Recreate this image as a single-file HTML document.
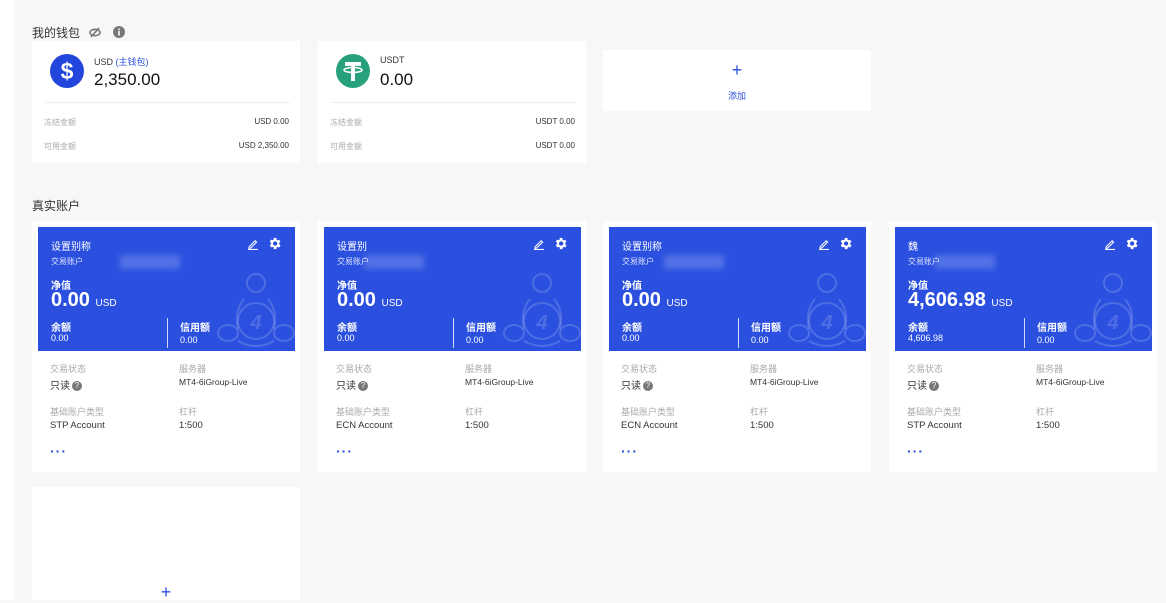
<!DOCTYPE html>
<html><head><meta charset="utf-8">
<style>
*{margin:0;padding:0;box-sizing:border-box}
body{width:1166px;height:600px;overflow:hidden;background:#f7f7f8;font-family:"Liberation Sans","Noto Sans CJK SC",sans-serif;position:relative;color:#222}
.strip{position:absolute;left:0;top:0;width:14px;height:600px;background:#fff}
.a{position:absolute;white-space:nowrap}
.card{position:absolute;background:#fff}
.hd{position:absolute;left:6px;top:6px;width:257px;height:124px;background:#2b50df;color:#fff;overflow:hidden}
.blur{position:absolute;background:rgba(220,230,255,.22);filter:blur(3px)}
.v{color:#333;font-size:10px}
</style></head><body>
<div class="strip"></div>

<div class="a" style="left:32px;top:24px;font-size:12px;color:#333">我的钱包</div>
<svg class="a" style="left:89px;top:27px" width="12" height="11" viewBox="0 0 12 11"><ellipse cx="6" cy="5.5" rx="5" ry="3.2" fill="none" stroke="#777" stroke-width="1.6"/><line x1="2" y1="10" x2="10" y2="1" stroke="#777" stroke-width="1.6"/></svg>
<svg class="a" style="left:113px;top:26px" width="12" height="12"><circle cx="6" cy="6" r="6" fill="#777"/><rect x="5.2" y="5" width="1.6" height="4.5" fill="#fff"/><rect x="5.2" y="2.6" width="1.6" height="1.5" fill="#fff"/></svg>

<div class="card" style="left:32px;top:41px;width:268px;height:122px">
  <svg class="a" style="left:18px;top:13px" width="34" height="34"><circle cx="17" cy="17" r="17" fill="#2246dc"/><text x="17" y="25" text-anchor="middle" font-size="23" font-weight="bold" fill="#fff" font-family="Liberation Sans">$</text></svg>
  <div class="a" style="left:62px;top:14px;font-size:9px;color:#333">USD <span style="color:#2b50df">(主钱包)</span></div>
  <div class="a" style="left:62px;top:29px;font-size:17px;color:#111">2,350.00</div>
  <div class="a" style="left:12px;top:61px;width:246px;height:1px;background:#eee"></div>
  <div class="a" style="left:12px;top:76px;font-size:8px;color:#aaa">冻结金额</div>
  <div class="a v" style="right:11px;top:76px;font-size:8px">USD 0.00</div>
  <div class="a" style="left:12px;top:100px;font-size:8px;color:#aaa">可用金额</div>
  <div class="a v" style="right:11px;top:100px;font-size:8px">USD 2,350.00</div>
</div>
<div class="card" style="left:318px;top:41px;width:268px;height:122px">
  <svg class="a" style="left:18px;top:13px" width="34" height="34"><circle cx="17" cy="17" r="17" fill="#26a17b"/><rect x="9" y="8" width="16" height="4" fill="#fff"/><rect x="15" y="8" width="4" height="19" fill="#fff"/><ellipse cx="17" cy="16" rx="9" ry="2.5" fill="none" stroke="#fff" stroke-width="1.6"/></svg>
  <div class="a" style="left:62px;top:14px;font-size:9px;color:#333">USDT</div>
  <div class="a" style="left:62px;top:29px;font-size:17px;color:#111">0.00</div>
  <div class="a" style="left:12px;top:61px;width:246px;height:1px;background:#eee"></div>
  <div class="a" style="left:12px;top:76px;font-size:8px;color:#aaa">冻结金额</div>
  <div class="a v" style="right:11px;top:76px;font-size:8px">USDT 0.00</div>
  <div class="a" style="left:12px;top:100px;font-size:8px;color:#aaa">可用金额</div>
  <div class="a v" style="right:11px;top:100px;font-size:8px">USDT 0.00</div>
</div>
<div class="card" style="left:603px;top:50px;width:268px;height:61px">
  <div class="a" style="left:0;width:268px;text-align:center;top:10px;font-size:18px;color:#2b50df;font-weight:300">+</div>
  <div class="a" style="left:0;width:268px;text-align:center;top:39px;font-size:9px;color:#2b50df">添加</div>
</div>

<div class="a" style="left:32px;top:197px;font-size:12px;color:#333">真实账户</div>

<div id="acc"></div>
<script>
const data=[
 {x:32,t:"设置别称",n:"0.00",b:"0.00",type:"STP Account",bl:82},
 {x:318,t:"设置别",n:"0.00",b:"0.00",type:"ECN Account",bl:40},
 {x:603,t:"设置别称",n:"0.00",b:"0.00",type:"ECN Account",bl:55},
 {x:889,t:"魏",n:"4,606.98",b:"4,606.98",type:"STP Account",bl:40}
];
let h="";
for(const d of data){
h+=`<div class="card" style="left:${d.x}px;top:221px;width:268px;height:251px">
<div class="hd">
 <div class="a" style="left:13px;top:11px;font-size:10px">${d.t}</div>
 <div class="a" style="left:13px;top:29px;font-size:8px;color:#dfe6ff">交易账户</div>
 <div class="blur" style="left:${d.bl}px;top:28px;width:60px;height:14px"></div>
 <div class="a" style="left:13px;top:50px;font-size:10px;font-weight:bold">净值</div>
 <div class="a" style="left:13px;top:62px;font-size:20px;font-weight:bold">${d.n} <span style="font-size:10px;font-weight:normal">USD</span></div>
 <div class="a" style="left:13px;top:92px;font-size:10px;font-weight:bold">余额</div>
 <div class="a" style="left:13px;top:106px;font-size:9px">${d.b}</div>
 <div class="a" style="left:129px;top:91px;width:1px;height:30px;background:#cfd8ff"></div>
 <div class="a" style="left:142px;top:92px;font-size:10px;font-weight:bold">信用额</div>
 <div class="a" style="left:142px;top:108px;font-size:9px">0.00</div>
 <svg class="a" style="left:209px;top:11px" width="12" height="12" viewBox="0 0 11 11"><path d="M2 8 L7.5 2.5 L8.8 3.8 L3.3 9.3 L1.8 9.5 Z" fill="none" stroke="#fff" stroke-width="1"/><line x1="1" y1="10.5" x2="10" y2="10.5" stroke="#fff" stroke-width="1"/></svg>
 <svg class="a" style="left:229px;top:9px" width="15" height="15" viewBox="0 0 24 24"><path fill="#fff" d="M19.4 13a7.8 7.8 0 0 0 0-2l2.1-1.6-2-3.5-2.5 1a7.6 7.6 0 0 0-1.7-1L15 3h-4l-.4 2.7a7.6 7.6 0 0 0-1.7 1l-2.5-1-2 3.5L6.6 11a7.8 7.8 0 0 0 0 2l-2.1 1.6 2 3.5 2.5-1a7.6 7.6 0 0 0 1.7 1L11 21h4l.4-2.7a7.6 7.6 0 0 0 1.7-1l2.5 1 2-3.5zM13 15.5a3.5 3.5 0 1 1 0-7 3.5 3.5 0 0 1 0 7z"/></svg>
 <svg class="a" style="left:178px;top:44px" width="80" height="80" viewBox="0 0 80 80" fill="none" stroke="rgba(255,255,255,.17)" stroke-width="2"><circle cx="40" cy="12" r="9"/><circle cx="40" cy="50" r="18"/><path d="M28 28 Q18 40 22 58"/><path d="M52 28 Q62 40 58 58"/><ellipse cx="12" cy="62" rx="10" ry="8"/><ellipse cx="68" cy="62" rx="10" ry="8"/><path d="M22 70 Q40 80 58 70"/><text x="40" y="58" text-anchor="middle" font-size="20" font-style="italic" font-weight="bold" fill="rgba(255,255,255,.17)" stroke="none" font-family="Liberation Sans">4</text></svg>
</div>
 <div class="a" style="left:18px;top:141px;font-size:9px;color:#aaa">交易状态</div>
 <div class="a" style="left:147px;top:141px;font-size:9px;color:#aaa">服务器</div>
 <div class="a" style="left:18px;top:156px;font-size:10px;color:#333">只读<span style="display:inline-block;width:10px;height:10px;border-radius:50%;background:#777;color:#fff;font-size:8px;text-align:center;line-height:10px;margin-left:2px;vertical-align:1px">?</span></div>
 <div class="a" style="left:147px;top:156px;font-size:8.5px;color:#333">MT4-6iGroup-Live</div>
 <div class="a" style="left:18px;top:184px;font-size:9px;color:#aaa">基础账户类型</div>
 <div class="a" style="left:147px;top:184px;font-size:9px;color:#aaa">杠杆</div>
 <div class="a" style="left:18px;top:199px;font-size:9.5px;color:#333">${d.type}</div>
 <div class="a" style="left:147px;top:199px;font-size:9.5px;color:#333">1:500</div>
 <div class="a" style="left:18px;top:222px;font-size:14px;color:#2b50df;letter-spacing:1px;font-weight:bold">···</div>
</div>`;
}
document.getElementById("acc").innerHTML=h;
</script>

<div class="card" style="left:32px;top:487px;width:268px;height:113px">
  <div class="a" style="left:0;width:268px;text-align:center;top:95px;font-size:18px;color:#2b50df;font-weight:300">+</div>
</div>
</body></html>
